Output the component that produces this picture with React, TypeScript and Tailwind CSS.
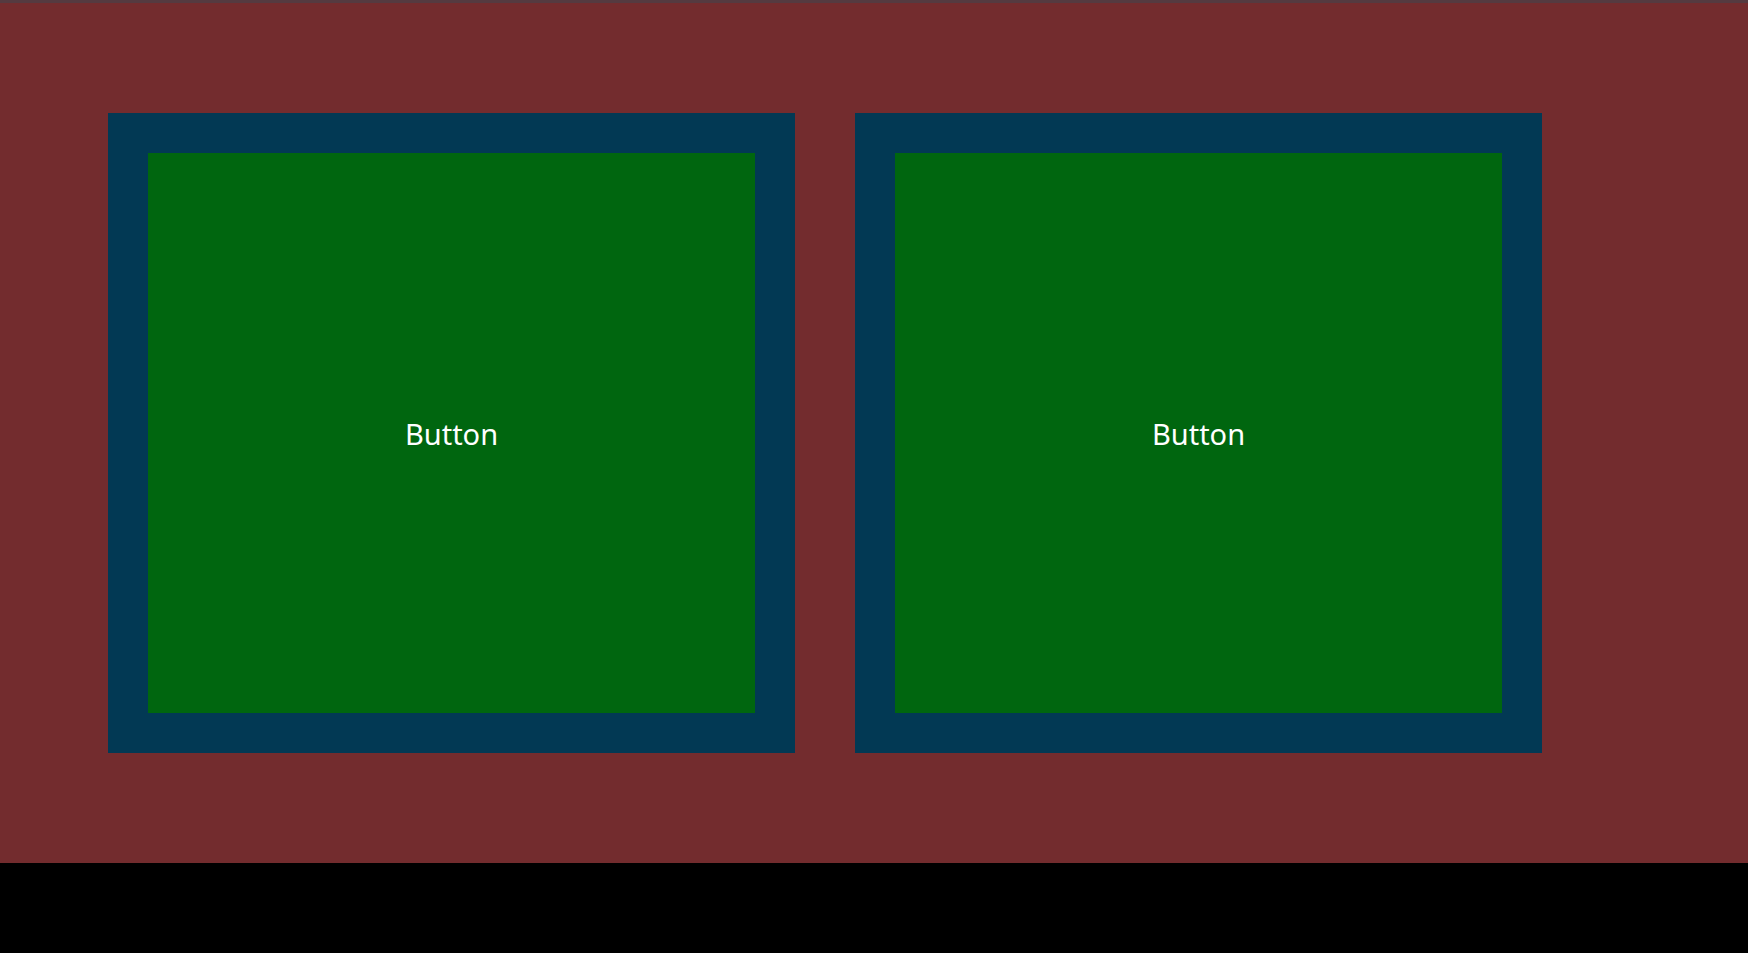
export default function App() {
  return (
    <div className="flex h-[953px] w-[1748px] flex-col bg-black" style={{ fontFamily: '"Noto Sans", "Open Sans", sans-serif' }}>
      <div className="h-[3px] bg-[#553a40]" />
      <div className="flex h-[860px] gap-[60px] bg-[#732c2e] pl-[108px] pt-[110px]">
        {[0, 1].map((i) => (
          <div key={i} className="h-[640px] w-[687px] bg-[#023954] p-[40px]">
            <button className="flex h-full w-full items-center justify-center bg-[#00660f] pt-[2px] text-[29px] text-white">
              Button
            </button>
          </div>
        ))}
      </div>
    </div>
  );
}
